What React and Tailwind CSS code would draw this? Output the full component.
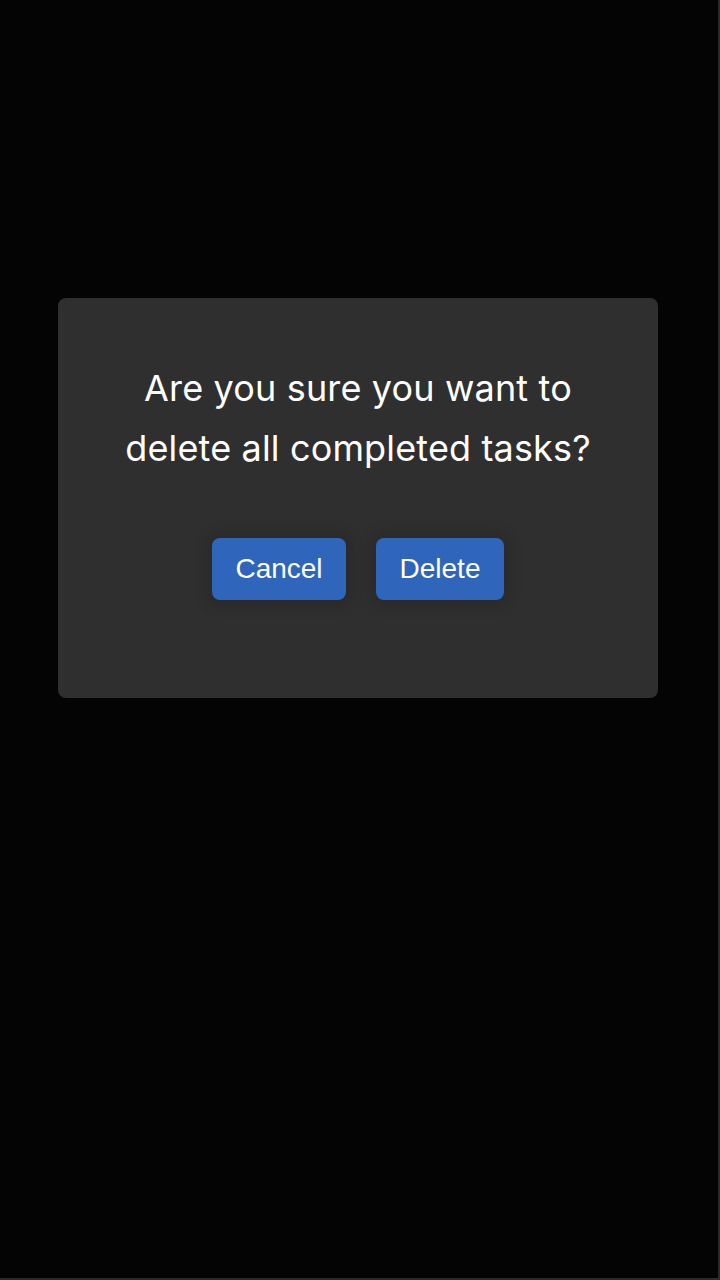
export default function App() {
  return (
    <div className="w-[720px] h-[1280px] bg-[#040404] border-r-2 border-b-2 border-[#2a2a2a] pl-[58px] pt-[298px] box-border">
      <div className="w-[600px] h-[400px] bg-[#2f2f2f] rounded-lg flex flex-col items-center pt-[60px]">
        <p className="text-center text-white text-[36px] leading-[60px] font-['Inter',sans-serif] tracking-[0.15px]">
          Are you sure you want to
          <br />
          delete all completed tasks?
        </p>
        <div className="flex gap-[30px] mt-[60px] font-['Liberation_Sans',Arial,sans-serif]">
          <button className="w-[134px] h-[62px] rounded-lg bg-[#2f66bb] text-white text-[28px] shadow-[0_0_14px_6px_rgba(0,0,0,0.12)]">
            Cancel
          </button>
          <button className="w-[128px] h-[62px] rounded-lg bg-[#2f66bb] text-white text-[28px] shadow-[0_0_14px_6px_rgba(0,0,0,0.12)]">
            Delete
          </button>
        </div>
      </div>
    </div>
  );
}
